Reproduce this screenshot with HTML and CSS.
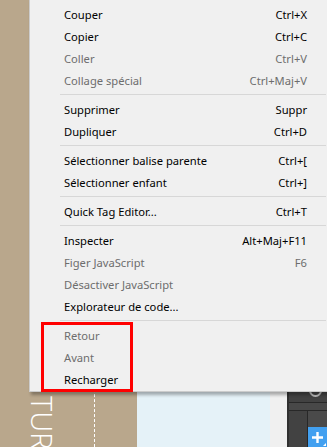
FILE: index.html
```html
<!DOCTYPE html>
<html lang="fr">

<head>
    <meta charset="UTF-8">
    <meta name="viewport" content="width=device-width, initial-scale=1.0">
    <title>Menu contextuel</title>
    <link rel="stylesheet" href="styles.css">
</head>

<body>

    <div class="scene">
        <div class="side">
            <div class="title">TUR</div>
            <div class="guide"></div>
        </div>
        <div class="canvas"></div>
        <div class="gutter"></div>
        <div class="panel">
            <div class="panel-top">
                <span class="knob"></span>
            </div>
            <div class="panel-band"></div>
            <div class="panel-body">
                <div class="panel-col"></div>
                <div class="panel-main">
                    <button class="add">
                        <svg width="11" height="11" viewBox="0 0 11 11">
                            <path d="M5.5 0v11M0 5.5h11" stroke="#fff" stroke-width="2.4" />
                        </svg>
                    </button>
                </div>
            </div>
        </div>
    </div>

    <div class="menu">
        <div class="item"><span>Couper</span><span>Ctrl+X</span></div>
        <div class="item"><span>Copier</span><span>Ctrl+C</span></div>
        <div class="item off"><span>Coller</span><span>Ctrl+V</span></div>
        <div class="item off"><span>Collage spécial</span><span>Ctrl+Maj+V</span></div>
        <div class="sep"></div>
        <div class="item"><span>Supprimer</span><span>Suppr</span></div>
        <div class="item"><span>Dupliquer</span><span>Ctrl+D</span></div>
        <div class="sep"></div>
        <div class="item"><span>Sélectionner balise parente</span><span>Ctrl+[</span></div>
        <div class="item"><span>Sélectionner enfant</span><span>Ctrl+]</span></div>
        <div class="sep"></div>
        <div class="item"><span>Quick Tag Editor...</span><span>Ctrl+T</span></div>
        <div class="sep"></div>
        <div class="item"><span>Inspecter</span><span>Alt+Maj+F11</span></div>
        <div class="item off"><span>Figer JavaScript</span><span>F6</span></div>
        <div class="item off"><span>Désactiver JavaScript</span><span></span></div>
        <div class="item"><span>Explorateur de code...</span><span></span></div>
        <div class="sep"></div>
        <div class="item off"><span>Retour</span><span></span></div>
        <div class="item off"><span>Avant</span><span></span></div>
        <div class="item"><span>Recharger</span><span></span></div>
    </div>

    <!-- annotation round the navigation group -->
    <div class="mark"></div>

</body>

</html>
```

FILE: styles.css
```css
html, body {
    margin: 0;
    height: 100%;
    overflow: hidden;
}

body {
    position: relative;
    font-family: "Segoe UI", "Noto Sans", "Open Sans", sans-serif;
}

.scene {
    display: flex;
    height: 447px;
}

.side {
    width: 137px;
    background-color: rgb(185, 167, 140);
    display: flex;
    flex-shrink: 0;
}

.title {
    writing-mode: vertical-rl;
    color: white;
    font-family: "Open Sans", sans-serif;
    font-weight: 300;
    font-size: 29px;
    line-height: 30px;
    margin-left: 27px;
    margin-top: 396px;
    white-space: nowrap;
}

.guide {
    margin-left: 37px;
    border-left: 1px dashed white;
}

.canvas {
    width: 133px;
    background-color: rgb(229, 242, 248);
    flex-shrink: 0;
}

.gutter {
    width: 17px;
    background-color: rgb(240, 240, 240);
    flex-shrink: 0;
}

.panel {
    flex: 1;
    background-color: rgb(66, 66, 66);
    border-left: 2px solid rgb(48, 48, 48);
    display: flex;
    flex-direction: column;
}

.panel-top {
    height: 402px;
    display: flex;
    align-items: flex-end;
    justify-content: center;
    overflow: hidden;
    border-bottom: 1px solid rgb(40, 40, 40);
}

.knob {
    width: 9px;
    height: 9px;
    border: 2px solid rgb(190, 190, 190);
    border-radius: 50%;
    margin-bottom: 5px;
    margin-left: 14px;
}

.panel-band {
    height: 7px;
    background-color: rgb(72, 72, 72);
    border-bottom: 1px solid rgb(40, 40, 40);
}

.panel-body {
    flex: 1;
    display: flex;
}

.panel-col {
    width: 18px;
    border-right: 1px solid rgb(40, 40, 40);
}

.panel-main {
    flex: 1;
    display: flex;
    align-items: flex-end;
    justify-content: flex-end;
    background-color: rgb(74, 74, 74);
}

.add {
    width: 19px;
    height: 20px;
    border: 0;
    padding: 0;
    background-color: rgb(66, 160, 240);
    display: flex;
    align-items: center;
    justify-content: center;
    position: relative;
}

.add::after {
    content: "";
    position: absolute;
    right: 1px;
    bottom: 1px;
    border-left: 3px solid transparent;
    border-bottom: 3px solid white;
}

.menu {
    position: absolute;
    left: 29px;
    top: -1px;
    width: 298px;
    padding: 3px 0 1px 0;
    background-color: rgb(240, 240, 240);
    border: 1px solid rgb(204, 204, 204);
    box-shadow: 2px 3px 3px rgba(0, 0, 0, 0.3);
    font-size: 11.2px;
    color: black;
}

.item {
    height: 22px;
    display: flex;
    align-items: center;
    justify-content: space-between;
    padding-left: 34px;
    padding-right: 21px;
    white-space: nowrap;
}

.off {
    color: rgb(109, 109, 109);
}

.sep {
    height: 1px;
    margin: 3px 2px 3px 30px;
    background-color: rgb(215, 215, 215);
}

.mark {
    position: absolute;
    left: 41px;
    top: 322px;
    width: 86px;
    height: 64px;
    border: 3px solid rgb(255, 0, 0);
}
```
